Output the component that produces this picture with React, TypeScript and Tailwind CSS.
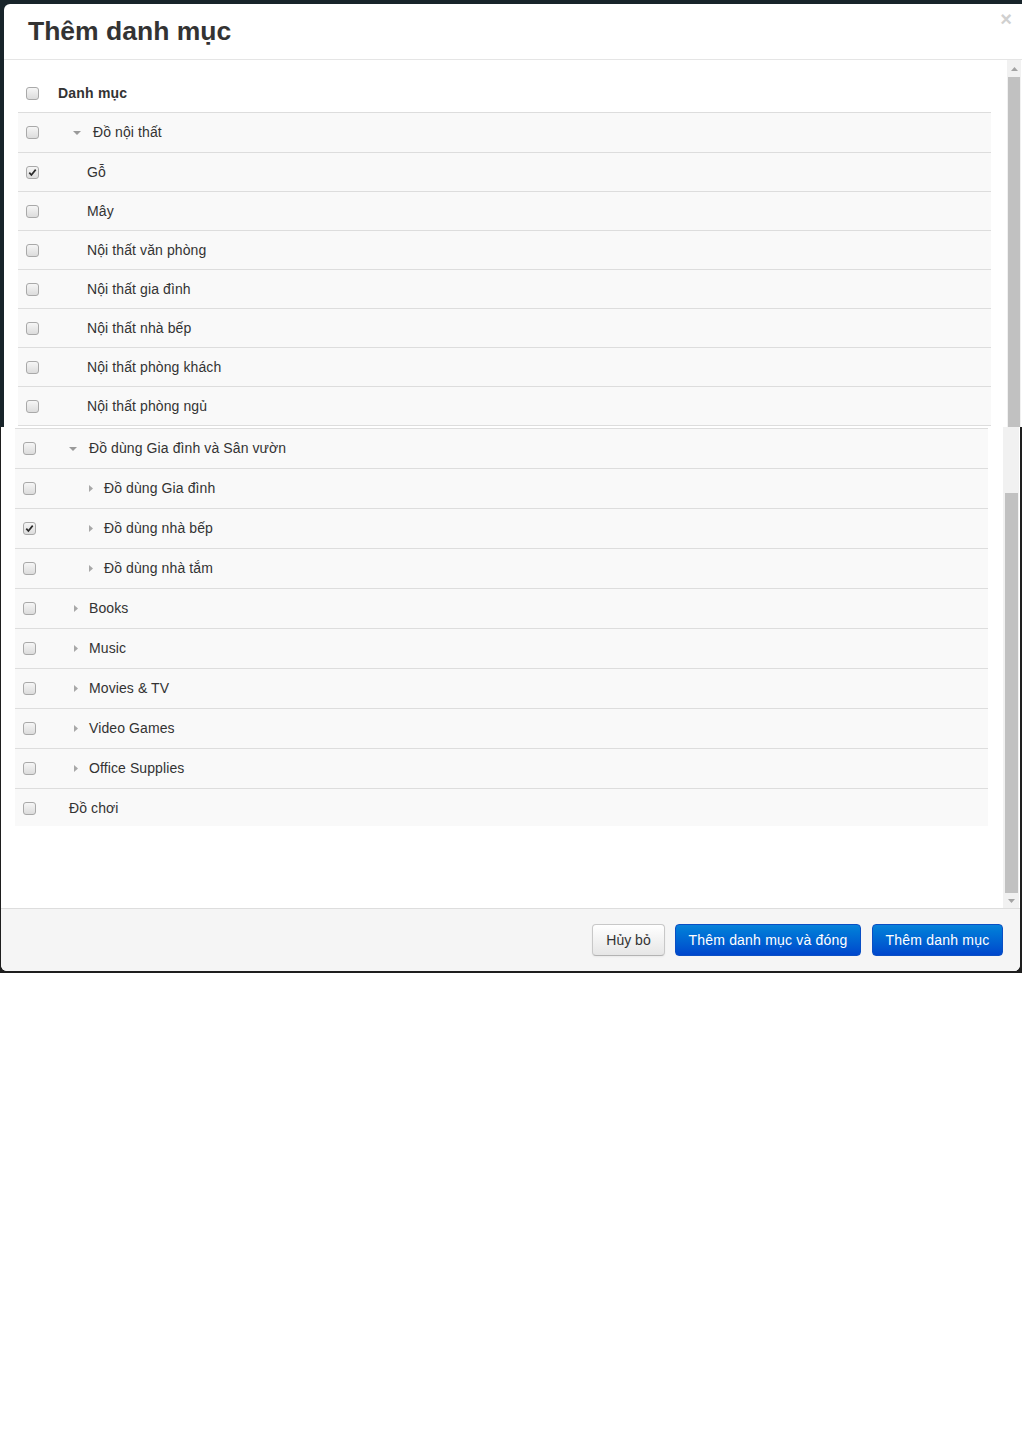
import React from "react";

type Caret = "down" | "right" | null;

function Box({ checked }: { checked?: boolean }) {
  return (
    <span className="flex h-[13px] w-[13px] items-center justify-center rounded-[3px] border border-[#a9a9a9] bg-linear-to-b from-[#f6f6f6] to-[#dcdcdc]">
      {checked && (
        <svg width="9" height="9" viewBox="0 0 9 9">
          <path d="M1.3 4.6 L3.4 7 L7.7 1.6" fill="none" stroke="#2a2a2a" strokeWidth="1.7" />
        </svg>
      )}
    </span>
  );
}

function CaretIcon({ kind }: { kind: Caret }) {
  if (kind === "down")
    return (
      <svg width="8" height="4" viewBox="0 0 8 4" className="shrink-0">
        <polygon points="0,0 8,0 4,4" fill="#9a9a9a" />
      </svg>
    );
  if (kind === "right")
    return (
      <svg width="4" height="7" viewBox="0 0 4 7" className="shrink-0">
        <polygon points="0,0 4,3.5 0,7" fill="#a8a8a8" />
      </svg>
    );
  return null;
}

function Row({
  label,
  caret = null,
  checked,
  pad,
  gap,
  h,
}: {
  label: string;
  caret?: Caret;
  checked?: boolean;
  pad: string;
  gap: string;
  h: string;
}) {
  return (
    <div className={`flex items-center border-t border-[#dddddd] bg-[#f9f9f9] ${h}`}>
      <div className="flex w-[21px] shrink-0 pl-[8px]">
        <Box checked={checked} />
      </div>
      <div className={`flex items-center ${pad} ${gap}`}>
        <CaretIcon kind={caret} />
        <span className="text-[14px] tracking-[0.1px] text-[#333333]">{label}</span>
      </div>
    </div>
  );
}

export default function App() {
  return (
    <div className="min-h-[1440px] w-[1022px] bg-white font-['Liberation_Sans',Arial,sans-serif]">
      {/* upper part */}
      <div className="flex h-[427px] overflow-hidden bg-[#18242a] pl-[4px] pt-[4px]">
        <div className="flex flex-1 flex-col rounded-tl-[6px] bg-white">
          <div className="flex h-[56px] shrink-0 justify-between border-b border-[#e5e5e5] pl-[24px] pr-[10px]">
            <h3 className="mt-[11px] text-[26.5px] font-bold leading-[32px] text-[#333333]">Thêm danh mục</h3>
            <span className="mt-[5px] text-[20px] font-bold leading-[20px] text-[#d0d0d0]">×</span>
          </div>
          <div className="flex flex-1">
            <div className="w-[1003px] pl-[14px] pt-[13px]">
              <div className="w-[973px]">
                <div className="flex h-[39px] items-center pt-[2px]">
                  <div className="flex w-[21px] shrink-0 pl-[8px]">
                    <Box />
                  </div>
                  <span className="pl-[19px] text-[14px] font-bold tracking-[0.2px] text-[#333333]">Danh mục</span>
                </div>
                <Row h="h-[40px]" label="Đồ nội thất" caret="down" pad="pl-[34px]" gap="gap-[12px]" />
                <Row h="h-[39px]" label="Gỗ" checked pad="pl-[48px]" gap="gap-0" />
                <Row h="h-[39px]" label="Mây" pad="pl-[48px]" gap="gap-0" />
                <Row h="h-[39px]" label="Nội thất văn phòng" pad="pl-[48px]" gap="gap-0" />
                <Row h="h-[39px]" label="Nội thất gia đình" pad="pl-[48px]" gap="gap-0" />
                <Row h="h-[39px]" label="Nội thất nhà bếp" pad="pl-[48px]" gap="gap-0" />
                <Row h="h-[39px]" label="Nội thất phòng khách" pad="pl-[48px]" gap="gap-0" />
                <Row h="h-[39px]" label="Nội thất phòng ngủ" pad="pl-[48px]" gap="gap-0" />
                <div className="h-[2px] border-t border-[#dddddd]" />
              </div>
            </div>
            <div className="flex w-[14px] flex-col bg-[#f1f1f1]">
              <div className="flex h-[17px] items-center justify-center">
                <svg width="7" height="4" viewBox="0 0 7 4">
                  <polygon points="0,4 7,4 3.5,0" fill="#a3a3a3" />
                </svg>
              </div>
              <div className="mx-[1px] flex-1 bg-[#c1c1c1]" />
            </div>
          </div>
        </div>
      </div>

      {/* lower part */}
      <div className="flex h-[546px] bg-[#1e1e1e] pb-[2px] pl-[1px] pr-[2px]">
        <div className="flex flex-1 flex-col overflow-hidden rounded-b-[6px] bg-white">
          <div className="flex flex-1">
            <div className="w-[1002px] pl-[14px] pt-[1px]">
              <div className="w-[973px]">
                <Row h="h-[40px]" label="Đồ dùng Gia đình và Sân vườn" caret="down" pad="pl-[33px]" gap="gap-[12px]" />
                <Row h="h-[40px]" label="Đồ dùng Gia đình" caret="right" pad="pl-[53px]" gap="gap-[11px]" />
                <Row h="h-[40px]" label="Đồ dùng nhà bếp" caret="right" checked pad="pl-[53px]" gap="gap-[11px]" />
                <Row h="h-[40px]" label="Đồ dùng nhà tắm" caret="right" pad="pl-[53px]" gap="gap-[11px]" />
                <Row h="h-[40px]" label="Books" caret="right" pad="pl-[38px]" gap="gap-[11px]" />
                <Row h="h-[40px]" label="Music" caret="right" pad="pl-[38px]" gap="gap-[11px]" />
                <Row h="h-[40px]" label="Movies & TV" caret="right" pad="pl-[38px]" gap="gap-[11px]" />
                <Row h="h-[40px]" label="Video Games" caret="right" pad="pl-[38px]" gap="gap-[11px]" />
                <Row h="h-[40px]" label="Office Supplies" caret="right" pad="pl-[38px]" gap="gap-[11px]" />
                <div className="flex h-[38px] items-center border-t border-[#dddddd] bg-[#f9f9f9] pt-[2px]">
                  <div className="flex w-[21px] shrink-0 pl-[8px]">
                    <Box />
                  </div>
                  <span className="pl-[33px] text-[14px] tracking-[0.1px] text-[#333333]">Đồ chơi</span>
                </div>
              </div>
            </div>
            <div className="flex w-[16px] flex-col bg-[#f1f1f1]">
              <div className="h-[66px]" />
              <div className="ml-[2px] w-[13px] flex-1 bg-[#c1c1c1]" />
              <div className="flex h-[15px] items-center justify-center">
                <svg width="7" height="4" viewBox="0 0 7 4">
                  <polygon points="0,0 7,0 3.5,4" fill="#a3a3a3" />
                </svg>
              </div>
            </div>
          </div>
          <div className="flex h-[63px] shrink-0 items-center justify-end border-t border-[#dddddd] bg-[#f5f5f5] pr-[17px]">
            <button className="h-[32px] w-[73px] rounded-[4px] border border-[#c8c8c8] border-b-[#b3b3b3] bg-linear-to-b from-white to-[#e6e6e6] text-[14px] text-[#333333] shadow-[0_1px_2px_rgba(0,0,0,0.05)]">
              Hủy bỏ
            </button>
            <button className="ml-[10px] h-[32px] w-[186px] rounded-[4px] border border-[#0a4fc4] bg-linear-to-b from-[#0a82d9] to-[#0046cc] text-[14px] tracking-[0.2px] text-white">
              Thêm danh mục và đóng
            </button>
            <button className="ml-[11px] h-[32px] w-[131px] rounded-[4px] border border-[#0a4fc4] bg-linear-to-b from-[#0a82d9] to-[#0046cc] text-[14px] tracking-[0.2px] text-white">
              Thêm danh mục
            </button>
          </div>
        </div>
      </div>
    </div>
  );
}
